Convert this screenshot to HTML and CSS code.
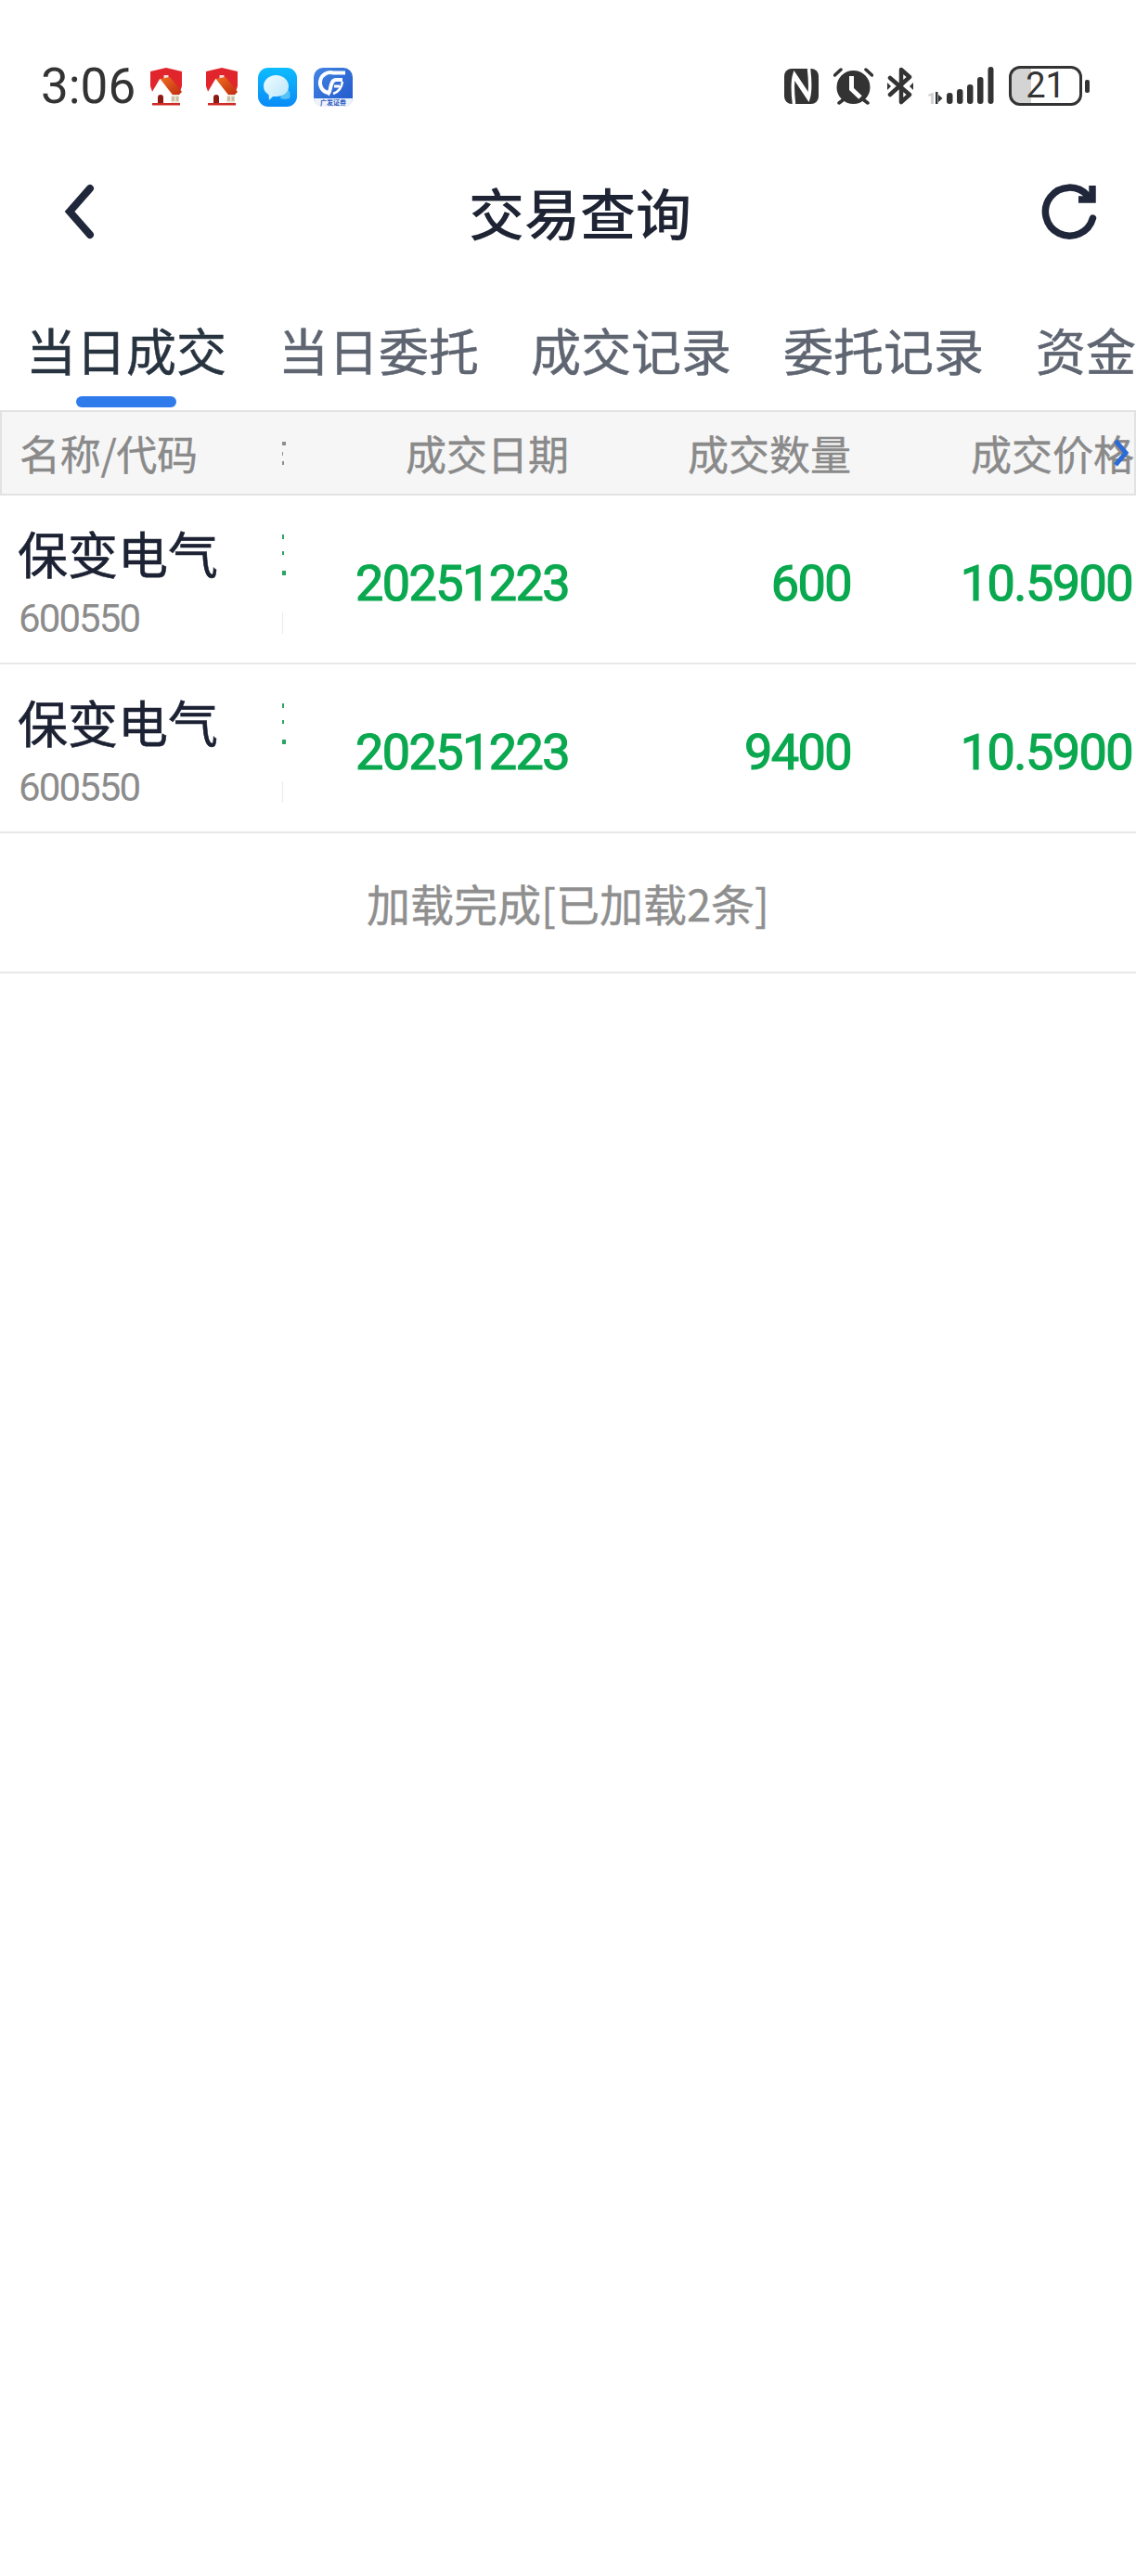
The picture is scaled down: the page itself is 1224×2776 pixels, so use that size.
FILE: index.html
```html
<!DOCTYPE html>
<html lang="zh-CN">
<head>
<meta charset="utf-8">
<title>交易查询</title>
<link rel="stylesheet" href="styles.css">
</head>
<body>
<div class="page">
  <div class="status">
    <div class="status-left">
      <span class="clock">3:06</span>
      <svg class="ic-house first" viewBox="0 0 34 41"><defs><linearGradient id="roof" x1="0" y1="0" x2="1" y2="1"><stop offset="0" stop-color="#ee7020"/><stop offset="1" stop-color="#c02a10"/></linearGradient></defs><path d="M17 0L34 4V20L30 31H4L0 20V4Z" fill="#e0262c"/><rect x="14.5" y="8" width="5" height="5" fill="#f6dcdc"/><path d="M13 25H31V38H13Z" fill="#efe8dc"/><path d="M3 28L10.5 14L22 28V38H4Z" fill="#fff"/><path d="M10 12L21 10L34 26L31 29H22Z" fill="url(#roof)"/><path d="M1 30L10.500 14L23 30" fill="none" stroke="#fff" stroke-width="2.500"/><path d="M8 39V32a3 3 0 0 1 6 0V39Z" fill="#8f1a14"/><path d="M23 31h3v5h-3zM27.500 31h3v5h-3z" fill="#c9bfa6"/><rect x="2" y="38" width="30" height="2.500" fill="#cf2a26"/></svg>
      <svg class="ic-house second" viewBox="0 0 34 41"><path d="M17 0L34 4V20L30 31H4L0 20V4Z" fill="#e0262c"/><rect x="14.5" y="8" width="5" height="5" fill="#f6dcdc"/><path d="M13 25H31V38H13Z" fill="#efe8dc"/><path d="M3 28L10.5 14L22 28V38H4Z" fill="#fff"/><path d="M10 12L21 10L34 26L31 29H22Z" fill="url(#roof)"/><path d="M1 30L10.500 14L23 30" fill="none" stroke="#fff" stroke-width="2.500"/><path d="M8 39V32a3 3 0 0 1 6 0V39Z" fill="#8f1a14"/><path d="M23 31h3v5h-3zM27.500 31h3v5h-3z" fill="#c9bfa6"/><rect x="2" y="38" width="30" height="2.500" fill="#cf2a26"/></svg>
      <svg class="ic-app chat" viewBox="0 0 42 42"><defs><linearGradient id="chatbg" x1="0" y1="0" x2="0" y2="1"><stop offset="0" stop-color="#0dbcff"/><stop offset="1" stop-color="#0a8bf6"/></linearGradient><linearGradient id="bub" x1="0" y1="0" x2="1" y2="1"><stop offset="0" stop-color="#f2fbff"/><stop offset="1" stop-color="#b5e6fb"/></linearGradient></defs><rect width="42" height="42" rx="11" fill="url(#chatbg)"/><path d="M27 23C32 22 36 25 34 33L29 34L24 33Z" fill="#55c3f5"/><path d="M19.500 8C27 8 33 13 33 20C33 27 27 31 19.500 31C18 31 17 31 16 31L12 35L11.500 29C8 27 6 24 6 20C6 13 12 8 19.500 8Z" fill="url(#bub)"/></svg>
      <svg class="ic-app gf" viewBox="0 0 42 42"><defs><linearGradient id="gfbg" x1="0" y1="0" x2="1" y2="1"><stop offset="0" stop-color="#4285e4"/><stop offset="1" stop-color="#2257ca"/></linearGradient></defs><rect width="42" height="42" rx="10" fill="url(#gfbg)"/><path d="M0 33H42V32C42 38 38 42 32 42H10C4 42 0 38 0 32Z" fill="#eef2fb"/><path d="M34 5.500H21A11 11 0 0 0 15 27" fill="none" stroke="#fff" stroke-width="4"/><path d="M31 13H24C20 13 19 17 18 22C17.500 25 17 27 15 29" fill="none" stroke="#fff" stroke-width="4"/><path d="M28 20H22" stroke="#fff" stroke-width="3"/><path d="M31 15C30 22 27 26 21 28" fill="none" stroke="#fff" stroke-width="2.500"/><text x="21" y="40" text-anchor="middle" class="gf-text">广发证券</text></svg>
    </div>
    <div class="status-right">
      <svg class="ic-nfc" viewBox="0 0 37 38"><rect width="37" height="38" rx="8" fill="#333"/><path d="M10.500 38C9 25 9 12 11 6L27 30" fill="none" stroke="#fff" stroke-width="3.500"/><path d="M26.500 0C28 13 28 26 26 32L10 8" fill="none" stroke="#fff" stroke-width="3.500"/></svg>
      <svg class="ic-alarm" viewBox="0 0 43 40"><circle cx="21.500" cy="21" r="18" fill="#333"/><path d="M19.500 9V23L29 32" fill="none" stroke="#fff" stroke-width="5"/><path d="M1.500 8L8 2M35 2L41.500 8M6 38L10 35M37 38L33 35" stroke="#333" stroke-width="3.500" stroke-linecap="round"/></svg>
      <svg class="ic-bt" viewBox="0 0 28 41"><path d="M3 12L24 30L15 38V3L24 11L3 30" fill="none" stroke="#333" stroke-width="4.500" stroke-linejoin="round" stroke-linecap="round"/><path d="M0 17L4 21L0 25ZM28 17L24 21L28 25Z" fill="#333"/></svg>
      <svg class="ic-signal" viewBox="0 0 73 41"><text x="1" y="40" class="sim">1</text><path d="M10 27h2.500v13H10zM13 30l4.500 4-4.500 4z" fill="#333"/><rect x="22" y="28" width="6.500" height="12" rx="3" fill="#333"/><rect x="33" y="24" width="6.500" height="16" rx="3" fill="#333"/><rect x="44" y="19" width="6.500" height="21" rx="3" fill="#333"/><rect x="55" y="11" width="6.500" height="29" rx="3" fill="#333"/><rect x="66.500" y="0" width="6" height="40" rx="3" fill="#333"/></svg>
      <div class="battery-wrap">
        <div class="battery">21</div>
        <span class="nub"></span>
      </div>
    </div>
  </div>

  <div class="nav">
    <svg class="ic-back" viewBox="0 0 36 62"><polyline points="29,6 7,31 29,56" fill="none" stroke="#20273a" stroke-width="8" stroke-linecap="round" stroke-linejoin="miter"/></svg>
    <h1 class="title">交易查询</h1>
    <svg class="ic-refresh" viewBox="0 0 64 68"><path d="M52 17A26 26 0 1 0 57.500 41" fill="none" stroke="#20273a" stroke-width="7.500" stroke-linecap="round"/><path d="M57 6V21H42" fill="none" stroke="#20273a" stroke-width="7.500"/></svg>
  </div>

  <div class="tabs">
    <div class="tab active"><span class="tab-label">当日成交</span><span class="tab-bar"></span></div>
    <div class="tab"><span class="tab-label">当日委托</span></div>
    <div class="tab"><span class="tab-label">成交记录</span></div>
    <div class="tab"><span class="tab-label">委托记录</span></div>
    <div class="tab"><span class="tab-label">资金</span></div>
  </div>

  <div class="thead">
    <div class="th th-name">名称/代码</div>
    <div class="slivers slivers-head"><i class="s1"></i><i class="s2"></i><i class="s3"></i></div>
    <div class="th">成交日期</div>
    <div class="th">成交数量</div>
    <div class="th">成交价格</div>
    <svg class="ic-more" viewBox="0 0 20 32"><polyline points="4,3 15,16 4,29" fill="none" stroke="#2a6bd6" stroke-width="5"/></svg>
  </div>

  <div class="row">
    <div class="name-cell"><div class="name">保变电气</div><div class="code">600550</div></div>
    <div class="slivers"><i class="s1"></i><i class="s2"></i><i class="s3"></i><i class="s4"></i></div>
    <div class="num">20251223</div>
    <div class="num">600</div>
    <div class="num">10.5900</div>
  </div>
  <div class="row">
    <div class="name-cell"><div class="name">保变电气</div><div class="code">600550</div></div>
    <div class="slivers"><i class="s1"></i><i class="s2"></i><i class="s3"></i><i class="s4"></i></div>
    <div class="num">20251223</div>
    <div class="num">9400</div>
    <div class="num">10.5900</div>
  </div>
  <div class="loaded">加载完成[已加载2条]</div>
</div>
</body>
</html>
```
FILE: styles.css
```css
* { box-sizing: border-box; }
html, body { margin: 0; padding: 0; background: #fff; }
body { font-family: "Noto Sans CJK SC", "Noto Sans", sans-serif; overflow: hidden; }
.page { width: 1224px; height: 2776px; overflow: hidden; background: #fff; }

/* status bar */
.status { height: 165px; padding: 71px 50px 0 44px; display: flex; justify-content: space-between; align-items: flex-start; }
.status-left, .status-right { display: flex; align-items: flex-start; }
.clock { font-family: Roboto, sans-serif; font-size: 53px; font-weight: 400; line-height: 46px; color: #333; width: 101px; margin-top: -1px; }
.ic-house { width: 34px; height: 41px; margin-top: 2px; }
.ic-house.first { margin-left: 17px; }
.ic-house.second { margin-left: 26px; }
.ic-app { width: 42px; height: 42px; margin-top: 2px; }
.chat { margin-left: 22px; }
.gf { margin-left: 18px; }
.gf-text { font-family: "Noto Sans CJK SC", sans-serif; font-size: 7px; fill: #2a5bc4; font-weight: 700; }
.ic-nfc { width: 37px; height: 38px; margin-top: 3px; }
.ic-alarm { width: 43px; height: 40px; margin: 2px 0 0 16px; }
.ic-bt { width: 28px; height: 41px; margin: 1px 0 0 15px; }
.ic-signal { width: 73px; height: 41px; margin: 1px 0 0 14px; overflow: visible; }
.sim { font-family: Roboto, sans-serif; font-size: 17px; font-weight: 700; fill: #ccc; }
.battery-wrap { display: flex; align-items: center; margin-left: 16px; }
.battery { width: 79px; height: 43px; border: 3.5px solid #333; border-radius: 12px; font-family: Roboto, sans-serif; font-size: 38px; line-height: 36px; text-align: center; color: #333; background: linear-gradient(90deg, #d4d4d4 0 21px, transparent 21px); }
.nub { width: 5px; height: 14px; margin-left: 3px; background: #333; border-radius: 2px; }

/* nav */
.nav { height: 128px; display: flex; align-items: center; justify-content: space-between; padding: 0 40px 2px 68px; }
.ic-back { width: 36px; height: 62px; }
.title { margin: 0 0 0 26px; font-size: 60px; line-height: 80px; font-weight: 500; color: #1e2433; }
.ic-refresh { width: 64px; height: 68px; }

/* tabs */
.tabs { height: 149px; display: flex; gap: 56px; padding-left: 28px; overflow: hidden; }
.tab { flex: none; width: 216px; display: flex; flex-direction: column; align-items: center; padding-top: 45px; }
.tab:last-child { width: 108px; }
.tab-label { font-size: 54px; line-height: 78px; font-weight: 400; -webkit-text-stroke: 0.5px currentColor; color: #5f6672; white-space: nowrap; }
.tab.active .tab-label { color: #283340; }
.tab-bar { width: 108px; height: 12px; margin-top: 11px; border-radius: 6px; background: #2f7bec; }

/* table */
.thead, .row { display: grid; }
.thead { grid-template-columns: 302px 4px 305px 304px 305px; height: 92px; width: 1224px; background: #f6f6f6; border: 2px solid #e2e2e2; align-items: center; position: relative; overflow: hidden; }
.th { font-size: 44px; line-height: 60px; font-weight: 400; -webkit-text-stroke: 0.4px currentColor; color: #8a8a8a; text-align: right; white-space: nowrap; }
.th-name { text-align: left; padding-left: 19px; letter-spacing: -0.3px; }
.ic-more { position: absolute; right: 4px; top: 28px; width: 20px; height: 32px; }

.row { height: 182px; border-bottom: 2px solid #e8e8e8; grid-template-columns: 304px 4px 305px 304px 303px; }
.name-cell { padding: 27px 0 0 19px; }
.name { font-size: 54px; line-height: 70px; font-weight: 400; -webkit-text-stroke: 0.6px currentColor; color: #1c2233; }
.code { font-family: Roboto, sans-serif; font-size: 42px; line-height: 50px; margin: 11px 0 0 1px; color: #8c8c8c; letter-spacing: -1.9px; }
.num { font-family: Roboto, sans-serif; font-size: 54px; font-weight: 400; -webkit-text-stroke: 1.2px currentColor; line-height: 60px; padding-top: 65px; color: #0aa84f; text-align: right; letter-spacing: -1.6px; }

.slivers { display: flex; flex-direction: column; align-items: flex-start; padding-top: 42px; }
.slivers i { display: block; background: #2aa45f; }
.slivers .s1 { width: 2px; height: 5px; }
.slivers .s2 { width: 2px; height: 4px; margin-top: 13px; }
.slivers .s3 { width: 4px; height: 5px; margin-top: 17px; }
.slivers .s4 { width: 1px; height: 23px; margin-top: 40px; background: #e4ecec; }
.slivers-head { padding-top: 0; align-self: center; }
.slivers-head i { background: #8e8e8e; }
.slivers-head .s1 { width: 4px; height: 4px; }
.slivers-head .s2 { width: 1px; height: 4px; margin-top: 7px; }
.slivers-head .s3 { width: 2px; height: 4px; margin-top: 6px; }

.loaded { height: 151px; border-bottom: 2px solid #e8e8e8; font-size: 47px; font-weight: 400; -webkit-text-stroke: 0.4px currentColor; line-height: 150px; color: #8f8f8f; text-align: center; }
```
